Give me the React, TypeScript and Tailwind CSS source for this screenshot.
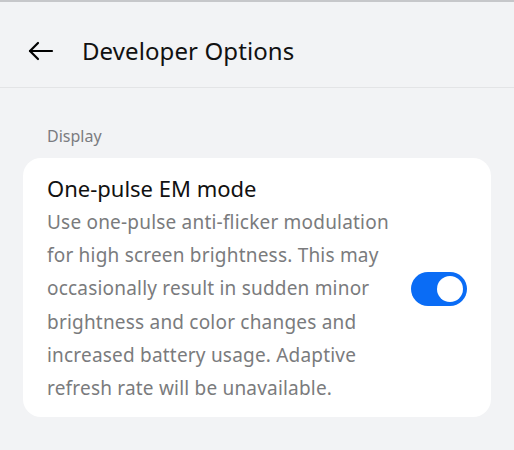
import React, { useState } from 'react';

function Toggle({ on, onChange }: { on: boolean; onChange: () => void }) {
  return (
    <button
      onClick={onChange}
      className={
        on
          ? 'w-[56px] h-[34px] rounded-full bg-[#0a6cf5] flex items-center justify-end px-[4px] shrink-0'
          : 'w-[56px] h-[34px] rounded-full bg-[#c9ccd1] flex items-center justify-start px-[4px] shrink-0'
      }
    >
      <span className="block w-[26px] h-[26px] rounded-full bg-white" />
    </button>
  );
}

export default function App() {
  const [enabled, setEnabled] = useState(true);

  return (
    <div
      className="w-[514px] h-[450px] bg-[#f2f3f5] border-t-2 border-[#c6c7ca] overflow-hidden"
      style={{ fontFamily: '"Noto Sans", "Open Sans", sans-serif' }}
    >
      {/* Header */}
      <div className="h-[86px] pt-[13px] flex items-center border-b border-[#e3e4e6]">
        <button className="ml-[27px] w-[28px] h-[28px] flex items-center justify-center text-black">
          <svg width="26" height="20" viewBox="0 0 26 20" fill="none" stroke="currentColor" strokeWidth="2.2" strokeLinecap="round" strokeLinejoin="round">
            <path d="M24 10H2" />
            <path d="M10 2L2 10l8 8" />
          </svg>
        </button>
        <h1 className="ml-[27px] text-[24px] text-[#111] tracking-[0.1px]">Developer Options</h1>
      </div>

      {/* Section */}
      <div className="px-[23px] pt-[38px]">
        <div className="pl-[24px] text-[16px] text-[#7b7c80] leading-[20px]">Display</div>
        <div className="mt-[12px] w-[468px] bg-white rounded-[18px] pl-[24px] pr-[24px] pt-[15px] pb-[12px] flex items-center">
          <div className="flex-1">
            <div className="text-[22px] text-[#111] leading-[30px]">One-pulse EM mode</div>
            <p className="mt-[3px] w-[350px] text-[19px] tracking-[0.2px] leading-[33.2px] text-[#7a7b7d]">
              Use one-pulse anti-flicker modulation for high screen brightness. This may occasionally result in sudden minor brightness and color changes and increased battery usage. Adaptive refresh rate will be unavailable.
            </p>
          </div>
          <Toggle on={enabled} onChange={() => setEnabled(!enabled)} />
        </div>
      </div>
    </div>
  );
}
